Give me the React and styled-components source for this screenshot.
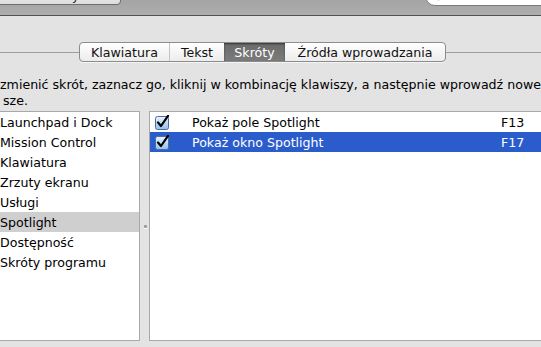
import styled, { createGlobalStyle } from 'styled-components';

const GlobalStyle = createGlobalStyle`
	html, body {
		margin: 0;
		padding: 0;
		background: #e3e3e3;
		overflow: hidden;
	}
	body {
		font-family: 'DejaVu Sans', 'Liberation Sans', sans-serif;
		font-size: 12.6px;
		color: #000;
	}
`;

const Page = styled.div`
	width: 541px;
	height: 347px;
	display: flex;
	flex-direction: column;
	overflow: hidden;
`;

const Toolbar = styled.div`
	height: 15px;
	flex-shrink: 0;
	display: flex;
	align-items: flex-end;
	justify-content: space-between;
	background: linear-gradient(#a4a4a4, #aeaeae);
	border-bottom: 1px solid #515151;
	overflow: hidden;
`;

const ShowAllButton = styled.div`
	align-self: flex-start;
	margin-top: -14px;
	margin-left: -6px;
	width: 127px;
	height: 19px;
	box-sizing: border-box;
	border: 1px solid #6d6d6d;
	border-radius: 4px;
	background: linear-gradient(#f6f6f6, #dcdcdc);
	display: flex;
	align-items: center;
	justify-content: center;
	font-size: 12px;
	color: #222;
`;

const SearchField = styled.div`
	align-self: flex-start;
	margin-top: -14px;
	margin-right: -20px;
	width: 136px;
	height: 20px;
	box-sizing: border-box;
	border: 1px solid #7b7b7b;
	border-radius: 10px;
	background: #fff;
	display: flex;
	align-items: flex-end;
	padding: 0 0 2px 10px;
`;

const TabRow = styled.div`
	display: flex;
	align-items: center;
	margin-top: 26px;
	height: 20px;
`;

const Rule = styled.div`
	height: 1px;
	background: #9e9e9e;
	width: ${(p) => (p.$grow ? 'auto' : `${p.$w}px`)};
	flex: ${(p) => (p.$grow ? 1 : 'none')};
`;

const Segmented = styled.div`
	display: flex;
	height: 20px;
	box-sizing: border-box;
	border: 1px solid #8c8c8c;
	border-radius: 4px;
	background: linear-gradient(#ffffff, #ececec);
	overflow: hidden;
	box-shadow: 0 1px 0 rgba(255, 255, 255, 0.6);
`;

const Segment = styled.div`
	width: ${(p) => p.$w}px;
	box-sizing: border-box;
	display: flex;
	align-items: center;
	justify-content: center;
	font-size: 12.6px;
	color: ${(p) => (p.$active ? '#fff' : '#111')};
	background: ${(p) => (p.$active ? 'linear-gradient(#6a6a6a, #7c7c7c)' : 'transparent')};
	box-shadow: ${(p) => (p.$active ? 'inset 0 1px 2px rgba(0,0,0,0.5)' : 'none')};
	border-left: ${(p) => (p.$divider ? '1px solid #c4c4c4' : 'none')};
`;

const Description = styled.div`
	margin-top: 15px;
	line-height: 16px;
	white-space: nowrap;
`;

const DescLine = styled.div`
	padding-left: ${(p) => p.$indent || 0}px;
`;

const Panels = styled.div`
	display: flex;
	margin-top: 2px;
	height: 230px;
	align-items: stretch;
`;

const CategoryList = styled.div`
	width: 141px;
	box-sizing: border-box;
	margin-left: -1px;
	background: #fff;
	border: 1px solid #a9a9a9;
	overflow: hidden;
`;

const CategoryRow = styled.div`
	height: 20px;
	display: flex;
	align-items: center;
	padding-left: 0;
	background: ${(p) => (p.$selected ? '#cfcfcf' : 'transparent')};
	white-space: nowrap;
`;

const Splitter = styled.div`
	width: 9px;
	display: flex;
	align-items: center;
	justify-content: center;
`;

const Grip = styled.div`
	width: 3px;
	height: 3px;
	margin-left: 2px;
	border-radius: 1px;
	background: #9a9a9a;
	box-shadow: 0 1px 0 #fff;
`;

const ShortcutList = styled.div`
	flex: 1;
	margin-right: -3px;
	box-sizing: border-box;
	background: #fff;
	border: 1px solid #a9a9a9;
`;

const ShortcutRow = styled.div`
	height: 20px;
	display: grid;
	grid-template-columns: 37px 1fr 42px;
	align-items: center;
	padding-left: 5px;
	background: ${(p) => (p.$selected ? '#2b5ccb' : 'transparent')};
	color: ${(p) => (p.$selected ? '#fff' : '#000')};
	white-space: nowrap;
`;

const Check = ({ className }) => (
	<span className={className}>
		<svg width="15" height="15" viewBox="0 0 15 15">
			<defs>
				<linearGradient id="cbg" x1="0" y1="0" x2="0" y2="1">
					<stop offset="0" stopColor="#eaf4ff" />
					<stop offset="1" stopColor="#8fc0f0" />
				</linearGradient>
			</defs>
			<rect x="0.5" y="1.5" width="13" height="13" rx="2" fill="url(#cbg)" stroke="#4a6f9e" />
			<path d="M3 7.5 L6 11 L13 0.8" fill="none" stroke="#000" strokeWidth="2.2" strokeLinecap="round" strokeLinejoin="round" />
		</svg>
	</span>
);

const Checkbox = styled(Check)`
	display: flex;
	align-items: center;
	height: 15px;
`;

const categories = [
	'Launchpad i Dock',
	'Mission Control',
	'Klawiatura',
	'Zrzuty ekranu',
	'Usługi',
	'Spotlight',
	'Dostępność',
	'Skróty programu',
];

const shortcuts = [
	{ label: 'Pokaż pole Spotlight', key: 'F13' },
	{ label: 'Pokaż okno Spotlight', key: 'F17', selected: true },
];

const tabs = [
	{ label: 'Klawiatura', w: 89 },
	{ label: 'Tekst', w: 55 },
	{ label: 'Skróty', w: 61, active: true },
	{ label: 'Źródła wprowadzania', w: 160 },
];

export default function App() {
	return (
		<Page>
			<GlobalStyle />
			<Toolbar>
				<ShowAllButton>Pokaż wszystko</ShowAllButton>
				<SearchField>
					<svg width="8" height="6" viewBox="0 0 8 6">
						<path d="M1 0 L3 3" stroke="#444" strokeWidth="1.6" />
					</svg>
				</SearchField>
			</Toolbar>
			<TabRow>
				<Rule $w={79} />
				<Segmented>
					{tabs.map((t, i) => (
						<Segment key={t.label} $w={t.w} $active={t.active} $divider={i === 1}>
							{t.label}
						</Segment>
					))}
				</Segmented>
				<Rule $grow />
			</TabRow>
			<Description>
				<DescLine>zmienić skrót, zaznacz go, kliknij w kombinację klawiszy, a następnie wprowadź nowe</DescLine>
				<DescLine $indent={3}>sze.</DescLine>
			</Description>
			<Panels>
				<CategoryList>
					{categories.map((c) => (
						<CategoryRow key={c} $selected={c === 'Spotlight'}>
							{c}
						</CategoryRow>
					))}
				</CategoryList>
				<Splitter>
					<Grip />
				</Splitter>
				<ShortcutList>
					{shortcuts.map((s) => (
						<ShortcutRow key={s.label} $selected={s.selected}>
							<Checkbox />
							<span>{s.label}</span>
							<span>{s.key}</span>
						</ShortcutRow>
					))}
				</ShortcutList>
			</Panels>
		</Page>
	);
}
